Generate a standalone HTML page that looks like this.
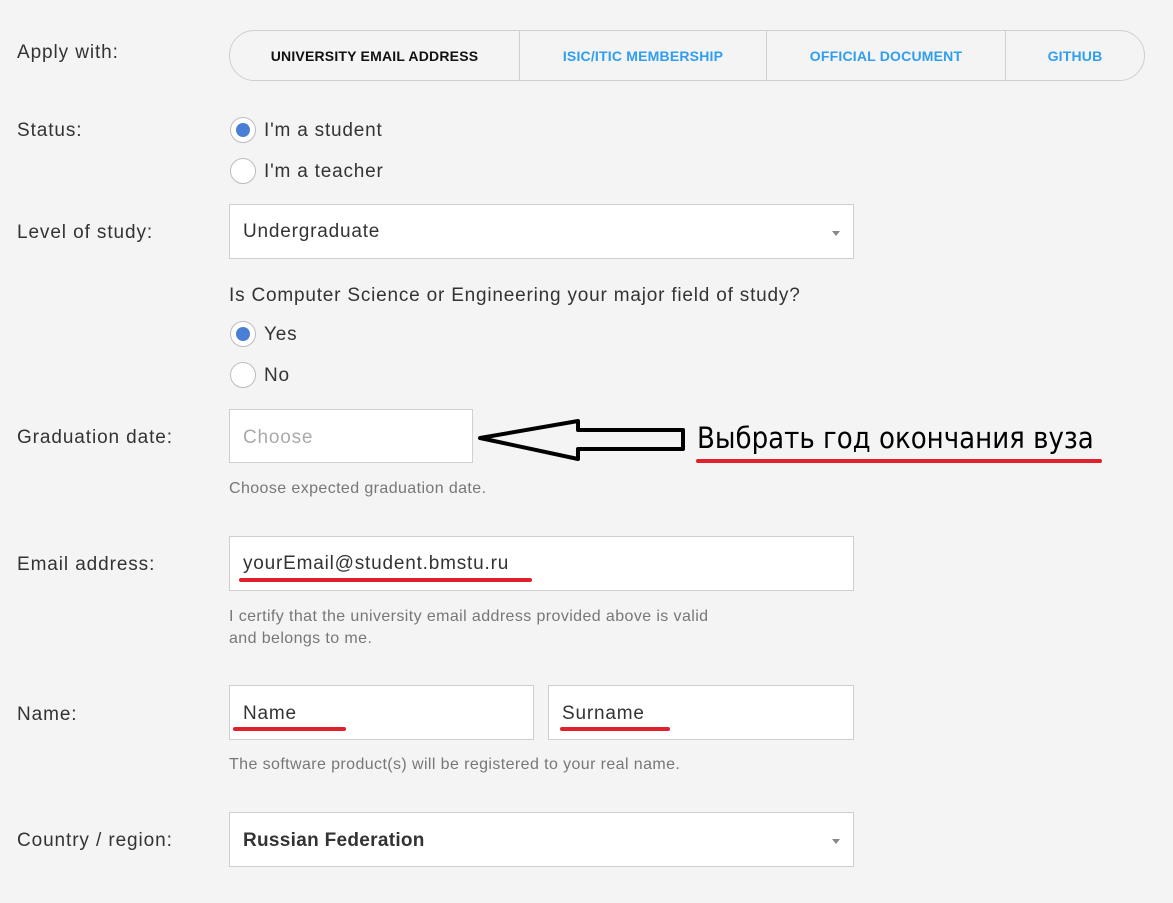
<!DOCTYPE html>
<html><head><meta charset="utf-8"><style>
body{margin:0;width:1173px;height:903px;background:#f4f4f4;font-family:"Liberation Sans","DejaVu Sans",sans-serif;color:#333;position:relative;overflow:hidden}
.a{position:absolute;white-space:nowrap}
.lbl{font-size:19px;color:#333;letter-spacing:0.9px}
.box{position:absolute;background:#fff;border:1px solid #cfcfcf;box-sizing:border-box}
.txt{font-size:19px;color:#333;letter-spacing:0.8px}
.help{font-size:16px;color:#777;letter-spacing:0.4px}
.radio{position:absolute;width:26px;height:26px;border-radius:50%;border:1px solid #bdbdbd;background:#fff;box-sizing:border-box}
.radio.on::after{content:"";position:absolute;left:5px;top:5px;width:14px;height:14px;border-radius:50%;background:#4b7fd6}
.red{position:absolute;height:4px;background:#e0202a;border-radius:2px}
.caret{position:absolute;width:0;height:0;border-left:4px solid transparent;border-right:4px solid transparent;border-top:5px solid #888}
.tab{position:absolute;top:32px;height:49px;line-height:49px;text-align:center;font-size:14px;font-weight:bold;color:#2f9ef0;letter-spacing:0.2px}
</style></head><body>
<div class="a lbl" style="left:17px;top:42px">Apply with:</div>
<div class="box" style="left:229px;top:30px;width:916px;height:51px;border-radius:26px;background:#f4f4f4"></div>
<div class="tab" style="left:230px;width:289px;color:#111">UNIVERSITY EMAIL ADDRESS</div>
<div class="a" style="left:519px;top:31px;width:1px;height:49px;background:#cfcfcf"></div>
<div class="tab" style="left:520px;width:246px">ISIC/ITIC MEMBERSHIP</div>
<div class="a" style="left:766px;top:31px;width:1px;height:49px;background:#cfcfcf"></div>
<div class="tab" style="left:767px;width:238px">OFFICIAL DOCUMENT</div>
<div class="a" style="left:1005px;top:31px;width:1px;height:49px;background:#cfcfcf"></div>
<div class="tab" style="left:1006px;width:138px">GITHUB</div>

<div class="a lbl" style="left:17px;top:120px">Status:</div>
<div class="radio on" style="left:230px;top:117px"></div>
<div class="a txt" style="left:264px;top:120px">I'm a student</div>
<div class="radio" style="left:230px;top:158px"></div>
<div class="a txt" style="left:264px;top:161px">I'm a teacher</div>

<div class="a lbl" style="left:17px;top:222px">Level of study:</div>
<div class="box" style="left:229px;top:204px;width:625px;height:55px"></div>
<div class="a txt" style="left:243px;top:221px">Undergraduate</div>
<div class="caret" style="left:832px;top:231px"></div>

<div class="a txt" style="left:229px;top:285px">Is Computer Science or Engineering your major field of study?</div>
<div class="radio on" style="left:230px;top:321px"></div>
<div class="a txt" style="left:264px;top:324px">Yes</div>
<div class="radio" style="left:230px;top:362px"></div>
<div class="a txt" style="left:264px;top:365px">No</div>

<div class="a lbl" style="left:17px;top:427px">Graduation date:</div>
<div class="box" style="left:229px;top:409px;width:244px;height:54px"></div>
<div class="a txt" style="left:243px;top:427px;color:#aaa">Choose</div>
<div class="a help" style="left:229px;top:480px">Choose expected graduation date.</div>
<svg class="a" style="left:0;top:0" width="1173" height="903"><polygon points="480,438 578,421 578,430 683,430 683,449 578,449 578,459" fill="none" stroke="#000" stroke-width="4" stroke-linejoin="round"/></svg>
<div class="a" style="left:697px;top:421px;font-size:29px;color:#000;font-family:'DejaVu Sans Condensed','Liberation Sans',sans-serif">Выбрать год окончания вуза</div>
<div class="red" style="left:696px;top:459px;width:406px"></div>

<div class="a lbl" style="left:17px;top:554px">Email address:</div>
<div class="box" style="left:229px;top:536px;width:625px;height:55px"></div>
<div class="a txt" style="left:243px;top:553px">yourEmail@student.bmstu.ru</div>
<div class="red" style="left:239px;top:578px;width:293px"></div>
<div class="a help" style="left:229px;top:606px;line-height:22px">I certify that the university email address provided above is valid<br>and belongs to me.</div>

<div class="a lbl" style="left:17px;top:704px">Name:</div>
<div class="box" style="left:229px;top:685px;width:305px;height:55px"></div>
<div class="a txt" style="left:243px;top:703px">Name</div>
<div class="red" style="left:233px;top:727px;width:113px"></div>
<div class="box" style="left:548px;top:685px;width:306px;height:55px"></div>
<div class="a txt" style="left:562px;top:703px">Surname</div>
<div class="red" style="left:560px;top:727px;width:110px"></div>
<div class="a help" style="left:229px;top:756px">The software product(s) will be registered to your real name.</div>

<div class="a lbl" style="left:17px;top:830px">Country / region:</div>
<div class="box" style="left:229px;top:812px;width:625px;height:55px"></div>
<div class="a txt" style="left:243px;top:830px;font-weight:bold;letter-spacing:0.3px">Russian Federation</div>
<div class="caret" style="left:832px;top:839px"></div>
</body></html>
